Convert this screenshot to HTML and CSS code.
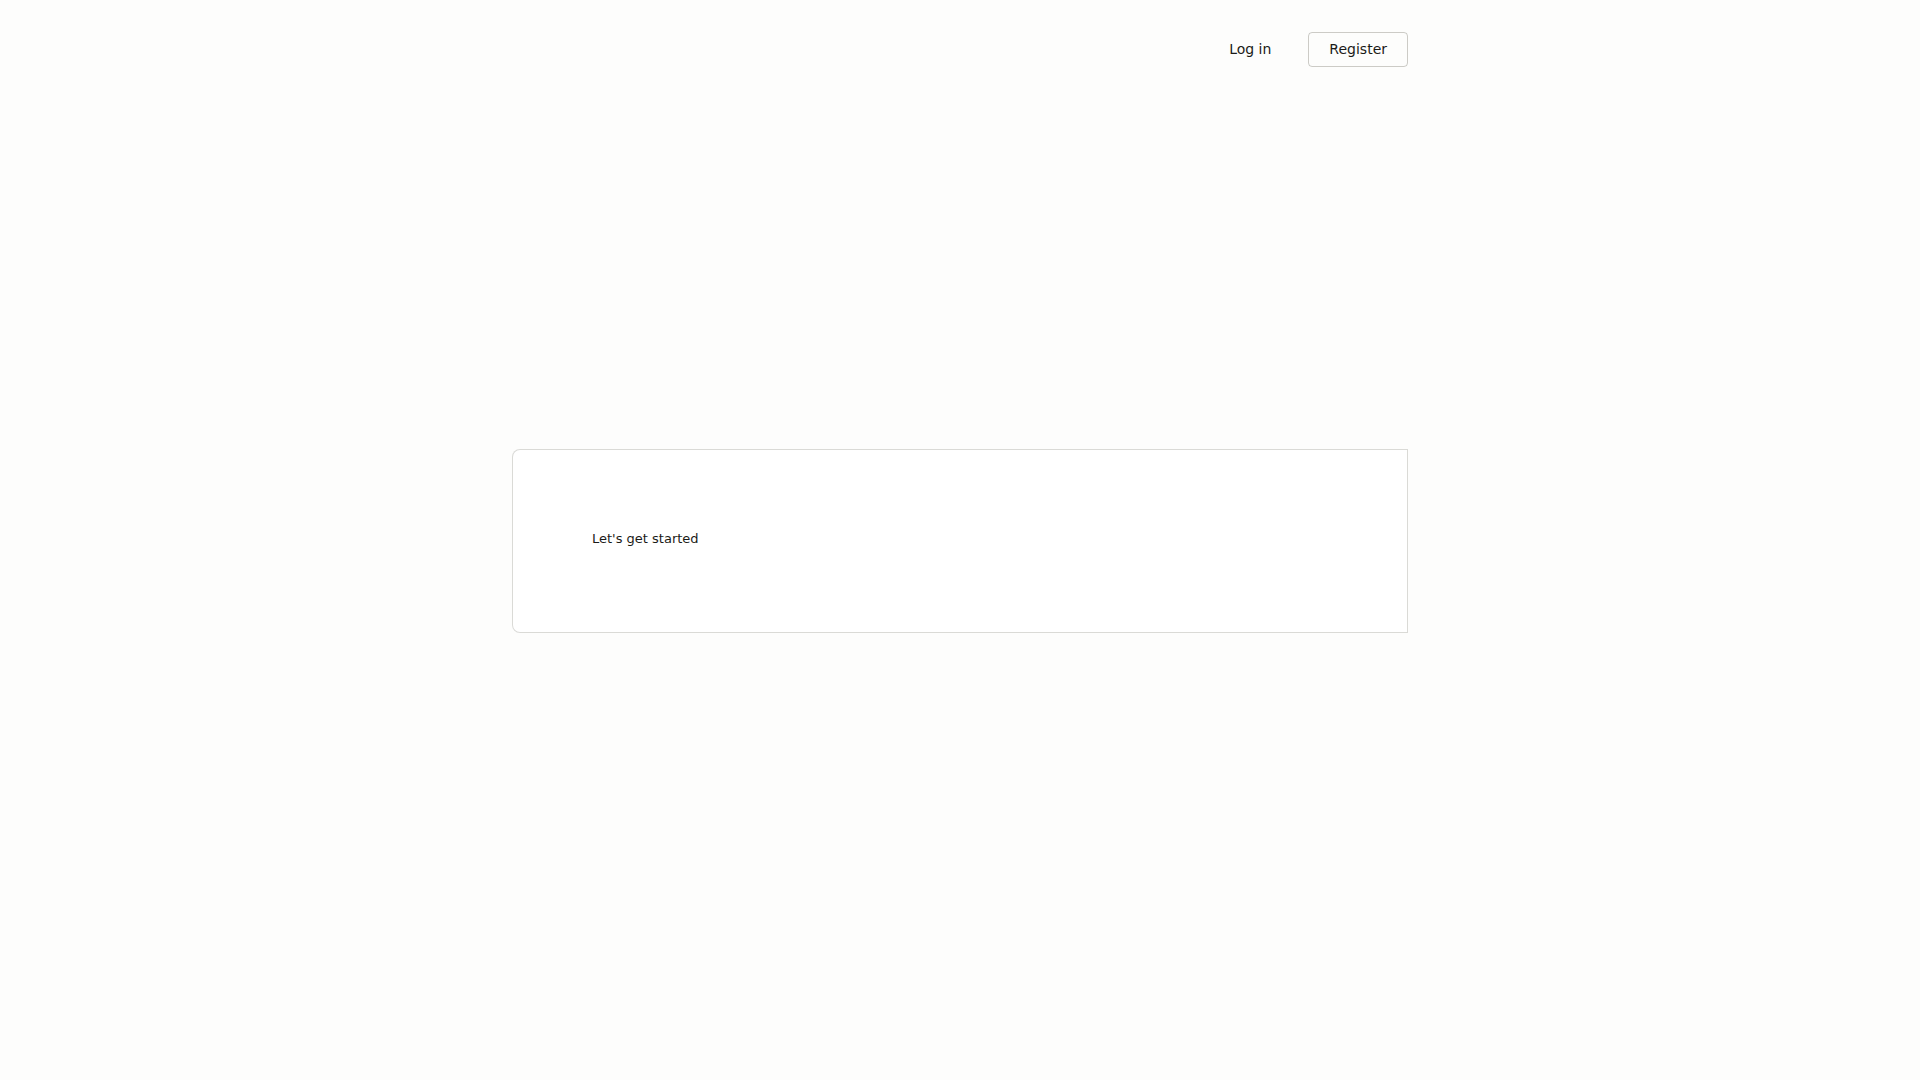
FILE: index.html
```html
<!DOCTYPE html>
<html lang="en">
<head>
<meta charset="utf-8">
<title>Welcome</title>
<link rel="stylesheet" href="styles.css">
</head>
<body>
  <header class="top">
    <nav class="nav">
      <a class="nav-link" href="#">Log in</a>
      <a class="nav-link nav-link--bordered" href="#">Register</a>
    </nav>
  </header>
  <div class="stage">
    <main class="card-wrap">
      <div class="card">
        <h1 class="card-title">Let's get started</h1>
      </div>
    </main>
  </div>
  <div class="bottom-spacer"></div>
</body>
</html>
```

FILE: styles.css
```css
html, body {
  margin: 0;
  padding: 0;
}

body {
  background: #FDFDFC;
  color: #1b1b18;
  font-family: "DejaVu Sans", "Liberation Sans", sans-serif;
  min-height: 100vh;
  box-sizing: border-box;
  padding: 32px;
  display: flex;
  flex-direction: column;
  align-items: center;
}

.top {
  width: 100%;
  max-width: 896px;
  font-size: 14px;
  margin-bottom: 24px;
}

.nav {
  display: flex;
  align-items: center;
  justify-content: flex-end;
  gap: 16px;
}

.nav-link {
  display: inline-block;
  padding: 6px 20px;
  line-height: 21px;
  font-size: 14px;
  color: #1b1b18;
  text-decoration: none;
  border: 1px solid transparent;
  border-radius: 2px;
}

.nav-link--bordered {
  border-color: rgba(25, 20, 0, 0.21);
  border-radius: 4px;
}

.stage {
  flex-grow: 1;
  width: 100%;
  display: flex;
  align-items: center;
  justify-content: center;
}

.card-wrap {
  display: flex;
  width: 100%;
  max-width: 896px;
}

.card {
  flex: 1;
  background: #ffffff;
  padding: 80px;
  font-size: 13px;
  line-height: 20px;
  box-shadow: inset 0 0 0 1px rgba(26, 26, 0, 0.16);
  border-radius: 8px 0 0 8px;
}

.card-title {
  margin: 0 0 4px 0;
  font-size: 13px;
  line-height: 20px;
  font-weight: 500;
}

.bottom-spacer {
  height: 58px;
  flex-shrink: 0;
}
```
